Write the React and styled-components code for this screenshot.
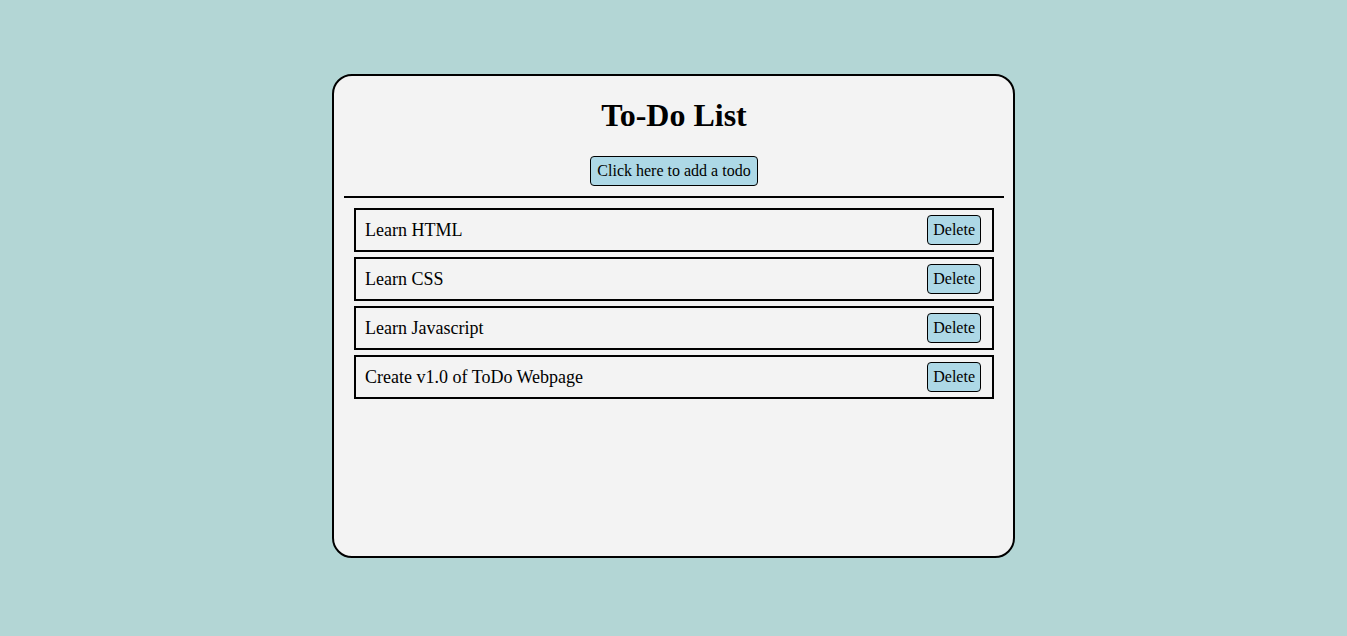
import React from "react";
import styled, { createGlobalStyle } from "styled-components";

const Global = createGlobalStyle`
  html, body { margin: 0; padding: 0; }
  body {
    background: #b3d6d5;
    font-family: "Liberation Serif", "Times New Roman", serif;
    color: #000;
  }
`;

const Page = styled.div`
  display: flex;
  justify-content: center;
  padding-top: 74px;
  min-height: 636px;
  box-sizing: border-box;
`;

const Card = styled.div`
  box-sizing: border-box;
  width: 683px;
  height: 484px;
  background: #f3f3f3;
  border: 2px solid #000;
  border-radius: 20px;
  padding: 0 9px 0 10px;
  display: flex;
  flex-direction: column;
  align-items: center;
`;

const Title = styled.h1`
  font-size: 32px;
  font-weight: bold;
  margin: 21px 0 0;
  line-height: 37px;
`;

const AddButton = styled.button`
  font-family: inherit;
  font-size: 16px;
  line-height: 18px;
  margin-top: 22px;
  padding: 5px 6px;
  background: #add8e6;
  border: 1px solid #000;
  border-radius: 4px;
  color: #000;
  cursor: pointer;
`;

const Divider = styled.hr`
  align-self: stretch;
  margin: 10px 0 10px;
  border: none;
  border-top: 2px solid #000;
  height: 0;
`;

const List = styled.ul`
  list-style: none;
  margin: 0;
  padding: 0 10px;
  align-self: stretch;
  display: flex;
  flex-direction: column;
  gap: 5px;
`;

const Item = styled.li`
  box-sizing: border-box;
  height: 44px;
  border: 2px solid #000;
  display: flex;
  align-items: center;
  justify-content: space-between;
  padding: 0 11px 0 9px;
  font-size: 18px;
`;

const DeleteButton = styled.button`
  font-family: inherit;
  font-size: 16px;
  line-height: 18px;
  padding: 5px 5px;
  background: #add8e6;
  border: 1px solid #000;
  border-radius: 4px;
  color: #000;
  cursor: pointer;
`;

const todos = [
  "Learn HTML",
  "Learn CSS",
  "Learn Javascript",
  "Create v1.0 of ToDo Webpage",
];

export default function App() {
  return (
    <>
      <Global />
      <Page>
        <Card>
          <Title>To-Do List</Title>
          <AddButton>Click here to add a todo</AddButton>
          <Divider />
          <List>
            {todos.map((t) => (
              <Item key={t}>
                <span>{t}</span>
                <DeleteButton>Delete</DeleteButton>
              </Item>
            ))}
          </List>
        </Card>
      </Page>
    </>
  );
}
